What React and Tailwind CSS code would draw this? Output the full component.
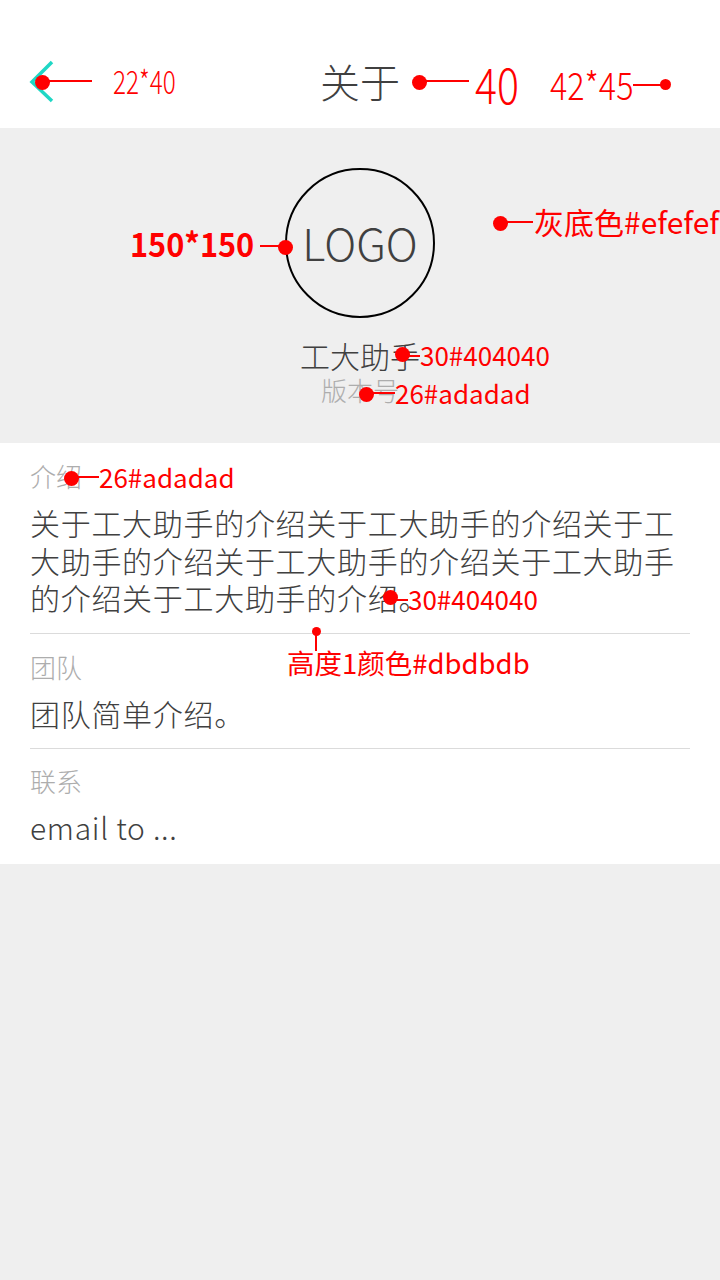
import React from "react";

function Dot({ className }) {
  return (
    <div
      className={
        "absolute w-[15px] h-[15px] -ml-[7px] -mt-[7px] rounded-full bg-[#ff0000] " +
        className
      }
    />
  );
}

function Section({ label, children, last }) {
  return (
    <div className={last ? "pt-[15px] pb-[17px]" : "pt-[16px] pb-[16px] border-b border-[#dbdbdb]"}>
      <div className="text-[26px] leading-[34px] text-[#adadad]">
        {label}
      </div>
      <div className="mt-[11px] text-[30px] leading-[37.5px] tracking-[0.7px] text-[#404040]">
        {children}
      </div>
    </div>
  );
}

function App() {
  return (
    <div className="relative min-h-[1280px] bg-[#efefef] font-['Noto_Sans_CJK_SC','Noto_Sans',sans-serif] font-light overflow-hidden">

      <div className="h-[128px] pt-[36px] bg-white grid grid-cols-[1fr_auto_1fr] items-center">
        <div className="pl-[29px]">
          <svg width="26" height="44" viewBox="0 0 26 44">
            <polyline
              points="23,2 3,22 23,41"
              fill="none"
              stroke="#1fd7c5"
              strokeWidth="3.5"
            />
          </svg>
        </div>
        <h1 className="text-[40px] leading-none text-[#404040] pb-[2px]">
          关于
        </h1>
        <div />
      </div>

      <div className="h-[315px] flex flex-col items-center pt-[40px]">
        <div className="w-[150px] h-[150px] rounded-full border-2 border-black flex items-center justify-center">
          <span className="text-[44px] leading-none text-[#404040] pb-[2px]">LOGO</span>
        </div>
        <div className="mt-[19px] text-[30px] leading-[36px] text-[#404040]">
          工大助手
        </div>
        <div className="text-[26px] leading-[34px] text-[#adadad]">
          版本号
        </div>
      </div>

      <div className="bg-white px-[30px]">
        <Section label="介绍">
          关于工大助手的介绍关于工大助手的介绍关于工大助手的介绍关于工大助手的介绍关于工大助手的介绍关于工大助手的介绍。
        </Section>
        <Section label="团队">
          团队简单介绍。
        </Section>
        <Section label="联系" last>
          email to ...
        </Section>
      </div>

      {/* annotations */}
      <div className="text-[#ff0000] font-normal">
        <Dot className="left-[42px] top-[82px]" />
        <div className="absolute left-[42px] top-[80px] w-[50px] h-[1.5px] bg-[#ff0000]" />
        <span className="absolute left-[113px] top-[64px] text-[32px] leading-none font-light origin-left scale-x-[0.76]">22*40</span>

        <Dot className="left-[419px] top-[82px]" />
        <div className="absolute left-[419px] top-[80px] w-[50px] h-[1.5px] bg-[#ff0000]" />
        <span className="absolute left-[475px] top-[57px] text-[50px] leading-none font-light origin-left scale-x-[0.82]">40</span>

        <span className="absolute left-[550px] top-[65px] text-[38px] leading-none font-light origin-left scale-x-[0.85]">42*45</span>
        <div className="absolute left-[633px] top-[84px] w-[32px] h-[1.5px] bg-[#ff0000]" />
        <div className="absolute left-[660px] top-[79px] w-[11px] h-[11px] rounded-full bg-[#ff0000]" />

        <span className="absolute left-[130px] top-[227px] text-[33px] leading-none font-bold origin-left scale-x-[0.93]">150*150</span>
        <div className="absolute left-[260px] top-[245px] w-[25px] h-[1.5px] bg-[#ff0000]" />
        <Dot className="left-[285px] top-[247px]" />

        <Dot className="left-[500px] top-[223px]" />
        <div className="absolute left-[500px] top-[221px] w-[33px] h-[1.5px] bg-[#ff0000]" />
        <span className="absolute left-[534px] top-[206px] text-[30px] leading-none whitespace-nowrap">灰底色#efefef</span>

        <Dot className="left-[402px] top-[354px]" />
        <div className="absolute left-[402px] top-[355px] w-[18px] h-[1.5px] bg-[#ff0000]" />
        <span className="absolute left-[420px] top-[342px] text-[26px] leading-none">30#404040</span>

        <Dot className="left-[366px] top-[394px]" />
        <div className="absolute left-[366px] top-[392px] w-[29px] h-[1.5px] bg-[#ff0000]" />
        <span className="absolute left-[395px] top-[380px] text-[26px] leading-none">26#adadad</span>

        <Dot className="left-[71px] top-[478px]" />
        <div className="absolute left-[71px] top-[476px] w-[28px] h-[1.5px] bg-[#ff0000]" />
        <span className="absolute left-[99px] top-[464px] text-[26px] leading-none">26#adadad</span>

        <Dot className="left-[390px] top-[597px]" />
        <div className="absolute left-[390px] top-[599px] w-[18px] h-[1.5px] bg-[#ff0000]" />
        <span className="absolute left-[408px] top-[586px] text-[26px] leading-none">30#404040</span>

        <div className="absolute left-[312px] top-[627px] w-[9px] h-[9px] rounded-full bg-[#ff0000]" />
        <div className="absolute left-[315px] top-[631px] w-[2px] h-[20px] bg-[#ff0000]" />
        <span className="absolute left-[287px] top-[649px] text-[27.5px] leading-none whitespace-nowrap">高度1颜色#dbdbdb</span>
      </div>

    </div>
  );
}

export default App;
